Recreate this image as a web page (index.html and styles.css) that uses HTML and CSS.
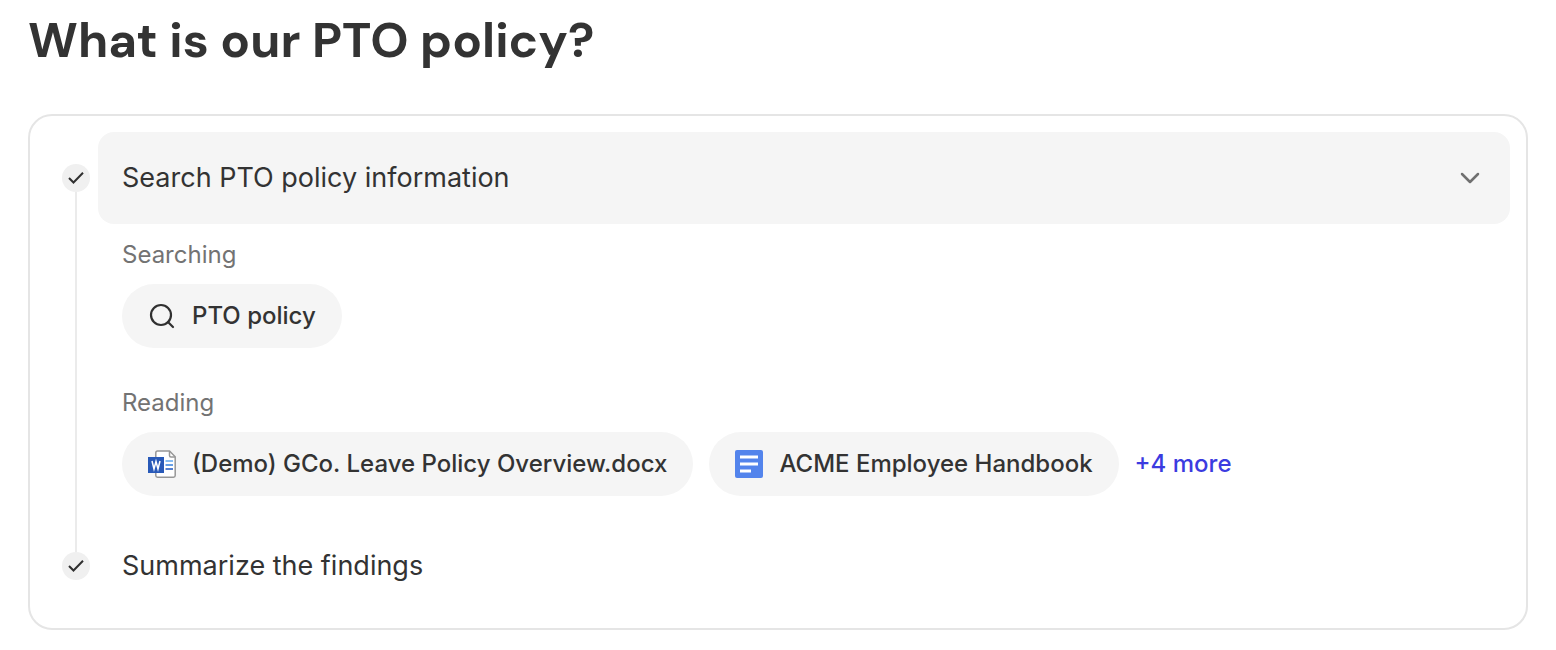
FILE: index.html
```html
<!DOCTYPE html>
<html lang="en">
<head>
<meta charset="utf-8">
<meta name="viewport" content="width=device-width, initial-scale=1">
<title>What is our PTO policy?</title>
<link rel="stylesheet" href="styles.css">
</head>
<body>
<main class="page">
  <h1 class="title">What is our PTO policy?</h1>
  <ol class="steps">
    <li class="step">
      <div class="rail rail-first">
        <span class="mark"><svg class="check" viewBox="0 0 28 28" aria-hidden="true"><path d="M7 14l4.500 4.500L21 8.800"/></svg></span>
      </div>
      <div class="content">
        <button class="step-header" type="button" aria-expanded="true">
          <span>Search PTO policy information</span>
          <svg class="chevron" viewBox="0 0 24 24" aria-hidden="true"><path d="M4 8l8 8 8-8"/></svg>
        </button>
        <section class="group">
          <h2 class="label">Searching</h2>
          <div class="chips">
            <button class="chip" type="button">
              <svg class="icon search" viewBox="0 0 28 28" aria-hidden="true"><circle cx="13" cy="13" r="10"/><path d="M20 20l5 5"/></svg>
              <span>PTO policy</span>
            </button>
          </div>
        </section>
        <section class="group">
          <h2 class="label">Reading</h2>
          <div class="chips">
            <a class="chip" href="#leave">
              <svg class="icon" viewBox="0 0 28 28" aria-hidden="true">
                <path d="M9.500 1h12l5.700 5.700v18.800q0 1.700-1.700 1.700h-16q-1.700 0-1.700-1.700V2.700Q7.800 1 9.500 1z" fill="#fff" stroke="#979797" stroke-width="1.500"/>
                <path d="M21.500 1v4.500q0 1.500 1.500 1.500h4" fill="none" stroke="#979797" stroke-width="1.500"/>
                <path d="M17.500 11H25" stroke="#69adf0" stroke-width="1.600"/>
                <path d="M17.500 15H25" stroke="#4288e0" stroke-width="1.600"/>
                <path d="M17.500 19H25" stroke="#2b5fc4" stroke-width="1.600"/>
                <path d="M0 7h16v16H0z" fill="#2859b8"/>
                <path d="M4 11l2 8 2-7.500 2 7.500 2-8" fill="none" stroke="#fff" stroke-width="1.500"/>
              </svg>
              <span>(Demo) GCo. Leave Policy Overview.docx</span>
            </a>
            <a class="chip" href="#handbook">
              <svg class="icon" viewBox="0 0 28 28" aria-hidden="true"><rect width="28" height="28" rx="2" fill="#5384ec"/><path d="M5 7h18M5 14h18M5 21h11" stroke="#fff" stroke-width="3"/></svg>
              <span>ACME Employee Handbook</span>
            </a>
            <a class="more" href="#more">+4 more</a>
          </div>
        </section>
      </div>
    </li>
    <li class="step">
      <div class="rail">
        <span class="mark"><svg class="check" viewBox="0 0 28 28" aria-hidden="true"><path d="M7 14l4.500 4.500L21 8.800"/></svg></span>
      </div>
      <div class="content last">Summarize the findings</div>
    </li>
  </ol>
</main>
</body>
</html>
```
FILE: styles.css
```css
* { box-sizing: border-box; }
body { margin: 0; background: #fff; color: #333; font-family: Inter, "Liberation Sans", sans-serif; }
.page { padding: 10px 28px 20px; }
.title { margin: 0 0 44px; font-family: "DM Sans", Inter, sans-serif; font-size: 49px; line-height: 60px; font-weight: 700; }
.steps { list-style: none; margin: 0; padding: 16px 16px 16px 32px; border: 2px solid #e5e5e5; border-radius: 24px; }
.step { display: grid; grid-template-columns: 28px minmax(0, 1fr); column-gap: 8px; }
.rail { display: flex; flex-direction: column; align-items: center; }
.rail-first { padding-top: 32px; }
.rail-first::after { content: ""; flex: 1; width: 2px; background: #ebebeb; }
.mark { display: flex; width: 28px; height: 28px; border-radius: 50%; background: #f0f0f0; }
.check { width: 28px; height: 28px; fill: none; stroke: #303030; stroke-width: 2; }
.step-header { display: flex; align-items: center; justify-content: space-between; width: 100%; padding: 28px; padding-left: 24px; border: 0; border-radius: 16px; background: #f5f5f5; color: inherit; font: 400 27px/36px Inter, sans-serif; text-align: left; }
.chevron { width: 24px; height: 24px; fill: none; stroke: #707070; stroke-width: 2.500; stroke-linecap: round; stroke-linejoin: round; }
.group { padding: 16px 0 40px 24px; }
.group + .group { padding-top: 0; padding-bottom: 56px; }
.label { margin: 0 0 14px; color: #737373; font-size: 24px; line-height: 30px; font-weight: 400; }
.chips { display: flex; flex-wrap: wrap; align-items: center; gap: 16px; }
.chip { display: flex; align-items: center; gap: 16px; height: 64px; padding: 0 26px; border: 0; border-radius: 32px; background: #f5f5f5; color: inherit; font: 500 24px/32px Inter, sans-serif; text-decoration: none; }
.icon { width: 28px; height: 28px; flex: none; }
.search { fill: none; stroke: #303030; stroke-width: 2.200; stroke-linecap: round; }
.more { color: #3b3be0; font-size: 24px; line-height: 32px; font-weight: 500; text-decoration: none; }
.last { padding: 0 24px 32px; font-size: 27px; line-height: 28px; }
```
